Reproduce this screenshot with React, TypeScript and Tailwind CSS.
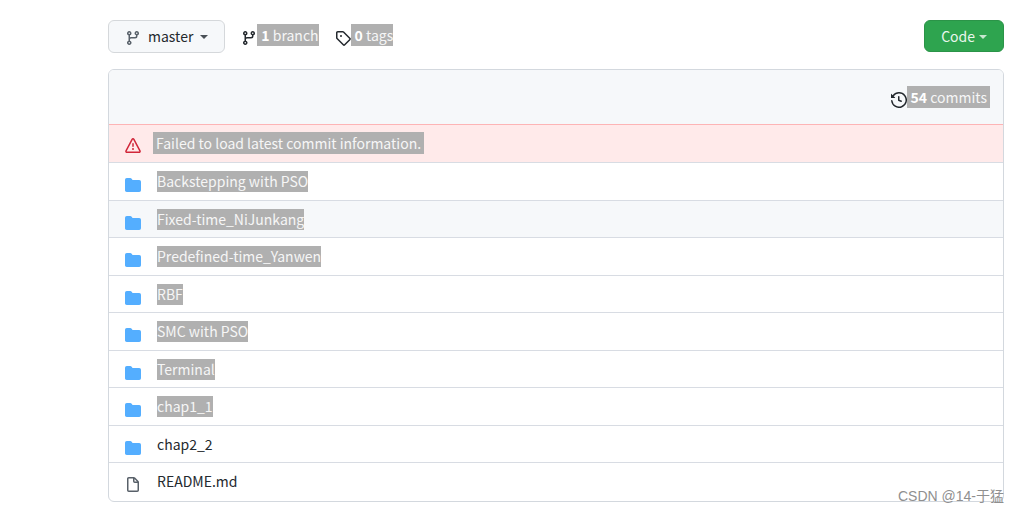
import type { ReactNode } from "react";

const paths = {
  branch:
    "M11.75 2.5a.75.75 0 100 1.5.75.75 0 000-1.5zm-2.25.75a2.25 2.25 0 113 2.122V6A2.5 2.5 0 0110 8.5H6a1 1 0 00-1 1v1.128a2.251 2.251 0 11-1.5 0V5.372a2.25 2.25 0 111.5 0v1.836A2.492 2.492 0 016 7h4a1 1 0 001-1v-.628A2.25 2.25 0 019.5 3.25zM4.25 12a.75.75 0 100 1.5.75.75 0 000-1.5zM3.5 3.25a.75.75 0 111.5 0 .75.75 0 01-1.5 0z",
  tag: "M2.5 7.775V2.75a.25.25 0 01.25-.25h5.025a.25.25 0 01.177.073l6.25 6.25a.25.25 0 010 .354l-5.025 5.025a.25.25 0 01-.354 0l-6.25-6.25a.25.25 0 01-.073-.177zm-1.5 0V2.75C1 1.784 1.784 1 2.75 1h5.025c.464 0 .91.184 1.238.513l6.25 6.25a1.75 1.75 0 010 2.474l-5.026 5.026a1.75 1.75 0 01-2.474 0l-6.25-6.25A1.75 1.75 0 011 7.775zM6 5a1 1 0 100 2 1 1 0 000-2z",
  history:
    "M1.643 3.143L.427 1.927A.25.25 0 000 2.104V5.75c0 .138.112.25.25.25h3.646a.25.25 0 00.177-.427L2.715 4.215a6.5 6.5 0 11-1.18 4.458.75.75 0 10-1.493.154 8.001 8.001 0 101.6-5.684zM7.75 4a.75.75 0 01.75.75v2.992l2.028.812a.75.75 0 01-.557 1.392l-2.5-1A.75.75 0 017 8.25v-3.5A.75.75 0 017.75 4z",
  alert:
    "M8.22 1.754a.25.25 0 00-.44 0L1.698 13.132a.25.25 0 00.22.368h12.164a.25.25 0 00.22-.368L8.22 1.754zm-1.763-.707c.659-1.234 2.427-1.234 3.086 0l6.082 11.378A1.75 1.75 0 0114.082 15H1.918a1.75 1.75 0 01-1.543-2.575L6.457 1.047zM9 11a1 1 0 11-2 0 1 1 0 012 0zm-.25-5.25a.75.75 0 00-1.5 0v2.5a.75.75 0 001.5 0v-2.5z",
  folder:
    "M1.75 1A1.75 1.75 0 000 2.75v10.5C0 14.216.784 15 1.75 15h12.5A1.75 1.75 0 0016 13.25v-8.5A1.75 1.75 0 0014.25 3h-6.5a.25.25 0 01-.2-.1l-.9-1.2c-.33-.44-.85-.7-1.4-.7h-3.5z",
  file: "M3.75 1.5a.25.25 0 00-.25.25v11.5c0 .138.112.25.25.25h8.5a.25.25 0 00.25-.25V6H9.75A1.75 1.75 0 018 4.25V1.5H3.75zm5.75.56v2.19c0 .138.112.25.25.25h2.19L9.5 2.06zM2 1.75C2 .784 2.784 0 3.75 0h5.086c.464 0 .909.184 1.237.513l3.414 3.414c.329.328.513.773.513 1.237v8.086A1.75 1.75 0 0112.25 15h-8.5A1.75 1.75 0 012 13.25V1.75z",
};

function Icon({ name, className }: { name: keyof typeof paths; className: string }) {
  return (
    <svg viewBox="0 0 16 16" fill="currentColor" aria-hidden="true" className={`size-4 shrink-0 ${className}`}>
      <path fillRule="evenodd" d={paths[name]} />
    </svg>
  );
}

function Caret({ className }: { className: string }) {
  return (
    <svg viewBox="0 0 8 4" fill="currentColor" aria-hidden="true" className={`mt-0.5 h-1 w-2 shrink-0 ${className}`}>
      <path d="M0 0h8L4 4z" />
    </svg>
  );
}

function Counter({ icon, count, label, className }: { icon: keyof typeof paths; count: number; label: string; className: string }) {
  return (
    <a href="#" className="flex items-start text-[#24292e]">
      <Icon name={icon} className="mt-1.5" />
      <span className={`bg-[#b0b0b0] pl-1 leading-[22px] text-[#f6f6f6] ${className}`}>
        <strong className="font-bold text-white">{count}</strong> {label}
      </span>
    </a>
  );
}

const entries = [
  { name: "Backstepping with PSO", selected: true },
  { name: "Fixed-time_NiJunkang", selected: true, hovered: true },
  { name: "Predefined-time_Yanwen", selected: true },
  { name: "RBF", selected: true },
  { name: "SMC with PSO", selected: true },
  { name: "Terminal", selected: true },
  { name: "chap1_1", selected: true },
  { name: "chap2_2" },
  { name: "README.md", file: true },
];

function Row({ children, hovered }: { children: ReactNode; hovered?: boolean }) {
  return (
    <li
      className={`flex items-start gap-4 border-t border-[#d8dce3] px-4 pt-2 odd:h-[38px] even:h-[37px] ${hovered ? "bg-[#f6f8fa]" : ""}`}
    >
      {children}
    </li>
  );
}

export default function App() {
  return (
    <div className="relative bg-white pt-5 pr-[15px] pb-2.5 pl-[108px] font-['Noto_Sans_CJK_SC',sans-serif] text-sm text-[#24292e]">
      <header className="flex items-start">
        <button className="flex h-[33px] items-center rounded-md border border-[#d5d8db] bg-[#f6f8fa] px-4 pb-px leading-[22px]">
          <Icon name="branch" className="mt-1 mr-[7px] text-[#586069]" />
          master
          <Caret className="ml-[7px] text-[#4a5057]" />
        </button>
        <nav className="ml-4 flex gap-4 pt-1">
          <Counter icon="branch" count={1} label="branch" className="" />
          <Counter icon="tag" count={0} label="tags" className="" />
        </nav>
        <button className="ml-auto flex h-8 items-center rounded-md border border-[#2b9448] bg-[#2ea44f] px-4 leading-[22px] text-[#eaf6ed]">
          Code
          <Caret className="ml-1 text-[#c8e7d0]" />
        </button>
      </header>

      <main className="mt-4 overflow-hidden rounded-md border border-[#d3d8de] pb-px">
        <div className="flex h-[54px] items-start justify-end bg-[#f6f8fa] px-[13px] pt-4">
          <Counter icon="history" count={54} label="commits" className="pr-[3px]" />
        </div>
        <div className="flex h-[38px] items-start gap-3 border-t border-[#fdb4b5] bg-[#ffeaea] px-4 pt-[7px]" role="alert">
          <Icon name="alert" className="mt-1.5 text-[#d1273a]" />
          <p className="bg-[#b0b0b0] px-[3px] leading-[22px] text-[#f6f6f6]">Failed to load latest commit information.</p>
        </div>
        <ul>
          {entries.map((entry) => (
            <Row key={entry.name} hovered={entry.hovered}>
              <Icon
                name={entry.file ? "file" : "folder"}
                className={entry.file ? "mt-1.5 text-[#586069]" : "mt-1.5 text-[#54aeff]"}
              />
              <a href="#" className={`leading-[21px] ${entry.selected ? "bg-[#b0b0b0] text-[#f6f6f6]" : ""}`}>
                {entry.name}
              </a>
            </Row>
          ))}
        </ul>
      </main>

      <span className="absolute right-[15px] bottom-1.5 font-['Liberation_Sans','Noto_Sans_CJK_SC',sans-serif] text-sm leading-5 text-[#8f8f8f]">
        CSDN @14-于猛
      </span>
    </div>
  );
}
